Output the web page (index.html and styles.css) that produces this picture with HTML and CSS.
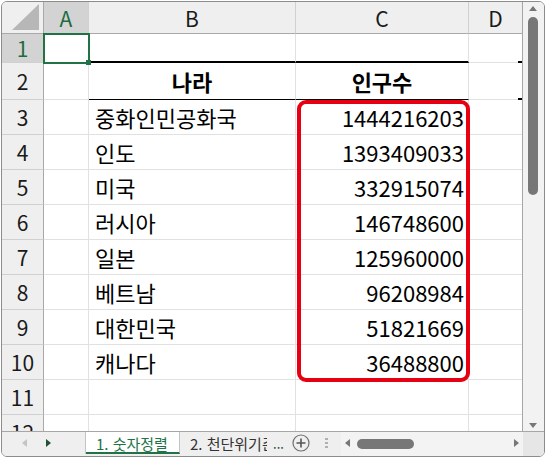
FILE: index.html
```html
<!DOCTYPE html>
<html lang="ko">
  <head>
    <meta charset="UTF-8" />
    <title>인구수</title>
    <link rel="stylesheet" href="styles.css">
  </head>
  <body>
    <div class="window">
      <div class="main">
        <div class="sheet">
          <div class="grid">
            <div class="corner"><span class="tri"></span></div>
            <div class="colhead sel">A</div>
            <div class="colhead">B</div>
            <div class="colhead">C</div>
            <div class="colhead">D</div>

            <div class="rowhead sel">1</div>
            <div class="cell active"><span class="handle"></span></div>
            <div class="cell over"></div>
            <div class="cell over"></div>
            <div class="cell tick-low"></div>

            <div class="rowhead">2</div>
            <div class="cell"></div>
            <div class="cell title under">나라</div>
            <div class="cell title under">인구수</div>
            <div class="cell tick-low"></div>

            <div class="rowhead">3</div>
            <div class="cell"></div>
            <div class="cell">중화인민공화국</div>
            <div class="cell num">1444216203</div>
            <div class="cell"></div>

            <div class="rowhead">4</div>
            <div class="cell"></div>
            <div class="cell">인도</div>
            <div class="cell num">1393409033</div>
            <div class="cell"></div>

            <div class="rowhead">5</div>
            <div class="cell"></div>
            <div class="cell">미국</div>
            <div class="cell num">332915074</div>
            <div class="cell"></div>

            <div class="rowhead">6</div>
            <div class="cell"></div>
            <div class="cell">러시아</div>
            <div class="cell num">146748600</div>
            <div class="cell"></div>

            <div class="rowhead">7</div>
            <div class="cell"></div>
            <div class="cell">일본</div>
            <div class="cell num">125960000</div>
            <div class="cell"></div>

            <div class="rowhead">8</div>
            <div class="cell"></div>
            <div class="cell">베트남</div>
            <div class="cell num">96208984</div>
            <div class="cell"></div>

            <div class="rowhead">9</div>
            <div class="cell"></div>
            <div class="cell">대한민국</div>
            <div class="cell num">51821669</div>
            <div class="cell"></div>

            <div class="rowhead">10</div>
            <div class="cell"></div>
            <div class="cell">캐나다</div>
            <div class="cell num">36488800</div>
            <div class="cell"></div>

            <div class="rowhead">11</div>
            <div class="cell"></div>
            <div class="cell"></div>
            <div class="cell"></div>
            <div class="cell"></div>

            <div class="rowhead">12</div>
            <div class="cell"></div>
            <div class="cell"></div>
            <div class="cell"></div>
            <div class="cell"></div>
          </div>
          <!-- red frame around the population numbers -->
          <div class="highlight"></div>
        </div>

        <div class="vscroll">
          <span class="arrow up"></span>
          <span class="vthumb"></span>
          <span class="arrow down"></span>
        </div>
      </div>

      <div class="tabbar">
        <div class="nav">
          <span class="arrow left off"></span>
          <span class="arrow right on"></span>
        </div>
        <div class="tab active">1. 숫자정렬</div>
        <div class="tab second">
          <span class="clip">2. 천단위기준</span>
          <span class="more">...</span>
        </div>
        <div class="add">
          <svg width="18" height="18" viewBox="0 0 18 18">
            <circle cx="9" cy="9" r="8" fill="none" stroke="#6f6f6f" stroke-width="1.2" />
            <path d="M9 4.5v9M4.5 9h9" stroke="#555" stroke-width="1.6" />
          </svg>
        </div>
        <div class="grip"><i></i><i></i><i></i></div>
        <div class="hscroll">
          <span class="arrow left"></span>
          <span class="hthumb"></span>
          <span class="arrow right"></span>
        </div>
        <div class="box"></div>
      </div>
    </div>
  </body>
</html>
```

FILE: styles.css
```css
body {
  margin: 1px;
  background: #fff;
  font-family: "Noto Sans CJK KR", "Noto Sans", sans-serif;
  color: #000;
}

.window {
  width: 544px;
  height: 456px;
  box-sizing: border-box;
  border: 1px solid #8c8c8c;
  border-radius: 6px;
  overflow: hidden;
  display: flex;
  flex-direction: column;
  background: #fff;
}

.main {
  display: flex;
  height: 429px;
}

.sheet {
  position: relative;
  width: 521px;
  height: 429px;
  overflow: hidden;
  border-right: 1px solid #a6a6a6;
}

.grid {
  display: grid;
  grid-template-columns: 42px 45px 207px 173px 54px;
  grid-template-rows: 32px 29px 37px repeat(10, 35px);
}

.grid > div {
  box-sizing: border-box;
  display: flex;
  align-items: center;
  line-height: 1;
}

.corner {
  position: relative;
  background: #efefef;
  border-right: 1px solid #a9a9a9;
  border-bottom: 1px solid #a9a9a9;
}

.corner .tri {
  position: absolute;
  right: 4px;
  bottom: 3px;
  width: 27px;
  height: 26px;
  background: #b7b7b7;
  clip-path: polygon(100% 0, 100% 100%, 0 100%);
}

.colhead {
  justify-content: center;
  background: #efefef;
  border-right: 1px solid #d0d0d0;
  border-bottom: 1px solid #a9a9a9;
  font-size: 21px;
  color: #1a1a1a;
  padding-top: 2px;
}

.rowhead {
  justify-content: center;
  background: #efefef;
  border-right: 1px solid #a9a9a9;
  border-bottom: 1px solid #d0d0d0;
  font-size: 21px;
  color: #1a1a1a;
}

.colhead.sel,
.rowhead.sel {
  background: #d3d3d3;
  color: #1d6b42;
}

.cell {
  position: relative;
  border-right: 1px solid #e1e1e1;
  border-bottom: 1px solid #e1e1e1;
  padding: 0 4px 0 6px;
  font-size: 22px;
  color: #000;
}

.cell.num {
  justify-content: flex-end;
}

.cell.title {
  justify-content: center;
  font-weight: bold;
  padding: 0;
}

.cell.over {
  border-bottom: 2px solid #000;
}

.cell.under {
  border-bottom: 1px solid #000;
}

.cell.tick-low::after {
  content: "";
  position: absolute;
  right: 0;
  bottom: -1px;
  width: 4px;
  height: 2px;
  background: #000;
}

.cell.active::before {
  content: "";
  position: absolute;
  left: -1px;
  top: -1px;
  width: 47px;
  height: 31px;
  box-sizing: border-box;
  border: 2px solid #217346;
}

.cell .handle {
  position: absolute;
  right: -3px;
  bottom: -3px;
  width: 5px;
  height: 5px;
  background: #217346;
  z-index: 2;
}

.highlight {
  position: absolute;
  left: 295px;
  top: 98px;
  width: 173px;
  height: 282px;
  box-sizing: border-box;
  border: 4px solid #e60012;
  border-radius: 9px;
}

.vscroll {
  position: relative;
  width: 21px;
  background: #f2f2f2;
}

.vthumb {
  position: absolute;
  left: 5px;
  top: 15px;
  width: 10px;
  height: 178px;
  border-radius: 5px;
  background: #777;
}

.arrow {
  position: absolute;
  width: 0;
  height: 0;
  border: solid transparent;
}

.arrow.up {
  left: 6px;
  top: 4px;
  border-width: 0 4.5px 5px;
  border-bottom-color: #777;
}

.arrow.down {
  left: 6px;
  top: 421px;
  border-width: 5px 4.5px 0;
  border-top-color: #777;
}

.tabbar {
  display: flex;
  align-items: flex-start;
  height: 25px;
  box-sizing: border-box;
  border-top: 1px solid #a6a6a6;
  background: #efefef;
  font-size: 15px;
}

.nav {
  position: relative;
  width: 84px;
  height: 22px;
  box-sizing: border-box;
  border-right: 1px solid #c4c4c4;
}

.tabbar .arrow {
  top: 7px;
}

.arrow.left {
  border-width: 4.5px 5px 4.5px 0;
  border-right-color: #777;
}

.arrow.right {
  border-width: 4.5px 0 4.5px 5px;
  border-left-color: #777;
}

.nav .arrow.left {
  left: 20px;
  border-right-color: #c4c4c4;
}

.nav .arrow.right {
  left: 44px;
  border-left-color: #1f5234;
}

.tab {
  display: flex;
  align-items: center;
  height: 22px;
  box-sizing: border-box;
  padding: 0 9px 0 10px;
  border-right: 1px solid #c4c4c4;
  color: #333;
  white-space: nowrap;
}

.tab.active {
  width: 94px;
  background: #fff;
  color: #217346;
  border-bottom: 2px solid #217346;
  padding-top: 2px;
}

.tab.second {
  padding-right: 5px;
  border-right: none;
}

.tab .clip {
  display: block;
  width: 77px;
  overflow: hidden;
}

.tab .more {
  margin-left: 6px;
  color: #1f5234;
  font-size: 13px;
}

.add {
  display: flex;
  align-items: center;
  height: 22px;
  padding: 0 8px 0 3px;
}

.add svg {
  display: block;
}

.grip {
  display: flex;
  flex-direction: column;
  gap: 2px;
  padding: 6px 13px 0 7px;
}

.grip i {
  width: 3px;
  height: 2px;
  background: #b0b0b0;
}

.hscroll {
  position: relative;
  flex: 1;
  height: 24px;
  background: #f3f3f3;
}

.hscroll .arrow.left {
  left: 4px;
}

.hscroll .arrow.right {
  right: 4px;
}

.hthumb {
  position: absolute;
  left: 16px;
  top: 7px;
  width: 57px;
  height: 10px;
  border-radius: 5px;
  background: #777;
}

.box {
  width: 21px;
  height: 24px;
  background: #e6e6e6;
}
```
